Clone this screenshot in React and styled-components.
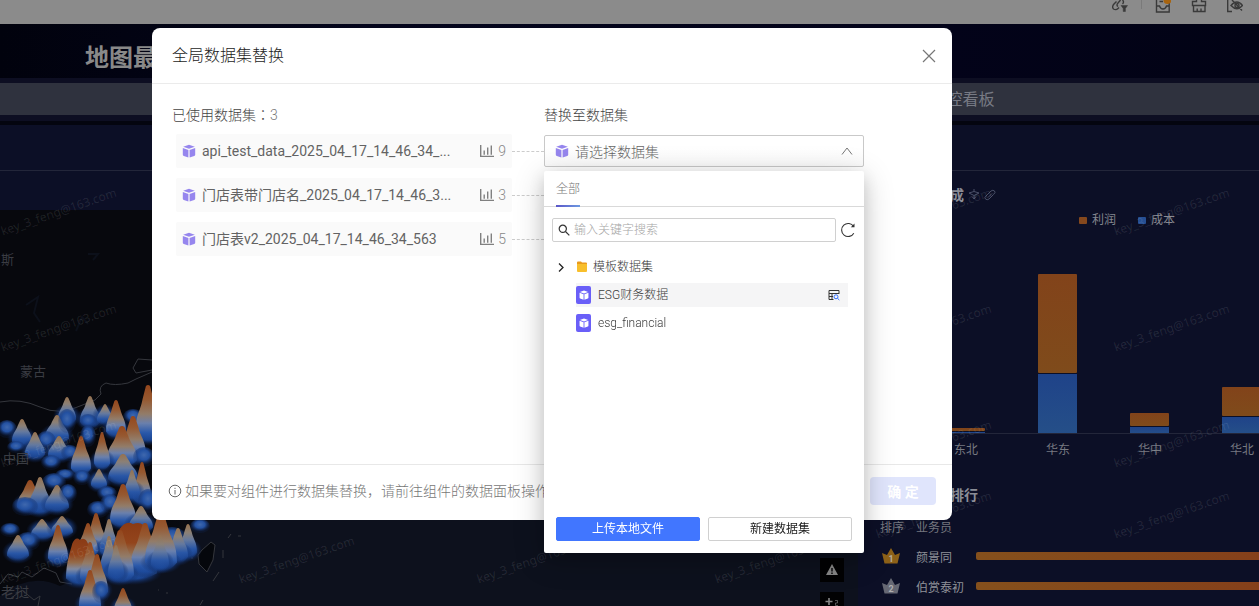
import React from "react";
import styled, { createGlobalStyle, css } from "styled-components";

const GlobalStyle = createGlobalStyle`
  *, *::before, *::after { box-sizing: border-box; }
  body {
    margin: 0;
    background: #0b0d18;
    font-family: Roboto, "Noto Sans CJK SC", sans-serif;
    font-size: 14px;
    font-weight: 300;
    color: #333;
  }
  button, input, select { font: inherit; color: inherit; }
  ul { list-style: none; margin: 0; padding: 0; }
  h1, h2, h3, p { margin: 0; }
  svg { display: block; flex: none; }
`;

/* ---------- Dashboard shell ---------- */

const Page = styled.div`
  height: 100vh;
  overflow: hidden;
  display: flex;
  flex-direction: column;
`;

const TopBar = styled.header`
  flex: none;
  height: 24px;
  padding-right: 16px;
  display: flex;
  justify-content: flex-end;
  align-items: flex-start;
  gap: 20px;
  background: #8b8b8b;
`;

const ToolButton = styled.button`
  width: 16px;
  height: 13px;
  padding: 0;
  border: 0;
  background: none;
  color: #3a3a3a;
`;

const Separator = styled.span`
  width: 1px;
  height: 9px;
  margin: 0 -7px 0 -7px;
  background: #7a7a7a;
`;

const Banner = styled.div`
  flex: none;
  height: 54px;
  padding: 16px 85px 0;
  background: linear-gradient(90deg, #01020d, #04051c 30%, #03031a 70%, #020315);
`;

const BannerTitle = styled.h1`
  font-size: 24px;
  line-height: 36px;
  font-weight: 700;
  color: #898989;
`;

const Ribbon = styled.div`
  flex: none;
  border: solid #0d0e22;
  border-width: 5px 0 6px;
  background: #2f323e;
`;

const RibbonTitle = styled.h2`
  width: 79%;
  height: 32px;
  padding-top: 2px;
  text-align: right;
  font-size: 16px;
  line-height: 30px;
  font-weight: 400;
  color: #777a84;
`;

const Board = styled.main`
  flex: 1;
  min-height: 0;
  display: flex;
  border-top: 4px solid #04050f;
`;

const MapCard = styled.section`
  flex: 1;
  min-width: 0;
  position: relative;
  display: flex;
  flex-direction: column;
  overflow: hidden;
  background: #0c0f26;
`;

const CardHead = styled.header`
  flex: none;
  height: ${(p) => p.$height}px;
  border-bottom: 1px solid #23263a;
`;

const MapGap = styled.div`
  flex: none;
  height: 39px;
`;

const MapView = styled.div`
  flex: 1;
  min-height: 0;
  background: linear-gradient(90deg, #07080d 0, #07080d 160px, #0e111e 260px);
`;

const MapTools = styled.div`
  position: absolute;
  right: 14px;
  bottom: -10px;
  display: grid;
  gap: 10px;
`;

const MapTool = styled.button`
  width: 24px;
  height: 24px;
  padding: 4px;
  border: 0;
  background: #020203;
  color: #858585;
`;

const SideColumn = styled.aside`
  flex: 0 0 401px;
  min-width: 0;
  display: flex;
  flex-direction: column;
  background: #0c0f26;
`;

const Card = styled.section`
  position: relative;
  overflow: hidden;
  flex: ${(p) => (p.$grow ? "1" : "none")};
`;

const ChartTitle = styled.h3`
  display: flex;
  align-items: center;
  gap: 4px;
  padding: 13px 0 0 92px;
  font-size: 14px;
  line-height: 22px;
  font-weight: 700;
  color: #8b8d96;
`;

const Legend = styled.ul`
  display: flex;
  gap: 22px;
  padding: 5px 0 0 221px;
  font-size: 12px;
  line-height: 18px;
  font-weight: 400;
  color: #85878f;
`;

const LegendItem = styled.li`
  display: flex;
  align-items: center;
  gap: 5px;
  &::before {
    content: "";
    width: 8px;
    height: 7px;
    border-radius: 1px;
    background: ${(p) => p.$color};
  }
`;

const RankTitle = styled.h3`
  padding: 11px 0 0 92px;
  font-size: 14px;
  line-height: 22px;
  font-weight: 700;
  color: #8b8d96;
`;

const RankTable = styled.table`
  width: 100%;
  margin-top: 5px;
  border-collapse: collapse;
  table-layout: fixed;
  font-size: 12px;
  font-weight: 400;
  color: #8f9198;
  th, td { padding: 0; height: 30px; text-align: left; font-weight: 400; }
  th { color: #74767e; }
  th:first-child { width: 58px; padding-left: 22px; }
  td:first-child { padding-left: 24px; }
  th:nth-child(2) { width: 60px; }
`;

const RankBar = styled.div`
  height: 8px;
  border-radius: 2px 0 0 2px;
  background: linear-gradient(90deg, #85501c, #85401a);
`;

/* ---------- Watermark ---------- */

const WatermarkLayer = styled.div`
  position: absolute;
  inset: ${(p) => p.$top}px 0 auto ${(p) => p.$left}px;
  display: grid;
  grid-template-columns: repeat(${(p) => p.$cols}, 238px);
  grid-auto-rows: 116px;
  pointer-events: none;
  span {
    place-self: center;
    font-family: "Noto Sans", sans-serif;
    font-size: 12px;
    font-weight: 400;
    color: rgba(255, 255, 255, 0.1);
    transform: rotate(-19deg);
  }
`;

function Watermark({ cols, rows, left, top }) {
  return (
    <WatermarkLayer $cols={cols} $left={left} $top={top} aria-hidden="true">
      {Array.from({ length: cols * rows }, (_, i) => (
        <span key={i}>key_3_feng@163.com</span>
      ))}
    </WatermarkLayer>
  );
}

/* ---------- Map drawing ---------- */

// [x, summit, base, half width, kind] — kinds: H broad hot, h hot, w warm, c cool
const PEAKS = [
  [67, 187, 212, 9, "w"], [90, 186, 215, 10, "w"], [105, 194, 212, 8, "w"],
  [133, 200, 214, 9, "c"], [116, 190, 225, 10, "h"], [148, 175, 230, 13, "h"],
  [7, 211, 227, 9, "c"], [22, 209, 234, 10, "w"], [57, 205, 231, 12, "w"], [67, 200, 222, 8, "c"],
  [88, 205, 218, 8, "c"], [88, 216, 236, 7, "c"], [46, 222, 240, 9, "c"],
  [35, 222, 247, 10, "w"], [133, 206, 250, 13, "h"], [122, 216, 254, 15, "h"],
  [16, 232, 242, 8, "c"], [59, 226, 248, 11, "w"], [70, 236, 250, 8, "c"], [102, 222, 257, 8, "h"],
  [81, 226, 262, 10, "h"], [51, 246, 259, 9, "c"], [144, 238, 256, 10, "c"],
  [123, 244, 272, 15, "w"], [65, 260, 270, 9, "c"], [54, 264, 280, 11, "c"], [82, 261, 274, 8, "c"],
  [99, 259, 277, 8, "w"], [142, 252, 292, 9, "h"], [132, 260, 288, 8, "w"],
  [30, 270, 300, 13, "h"], [40, 267, 302, 11, "w"], [57, 275, 300, 12, "w"], [68, 275, 292, 8, "c"], [25, 288, 305, 12, "c"],
  [107, 277, 290, 9, "c"], [148, 280, 302, 9, "c"], [98, 292, 307, 10, "c"], [110, 285, 302, 9, "c"], [123, 274, 315, 13, "h"],
  [141, 296, 320, 12, "w"], [10, 314, 326, 9, "c"],
  [42, 309, 327, 11, "w"], [62, 306, 324, 11, "w"], [28, 323, 340, 11, "c"],
  [18, 325, 348, 11, "w"], [58, 315, 352, 10, "h"],
  [96, 303, 340, 10, "h"], [88, 313, 345, 10, "h"], [109, 309, 345, 9, "w"],
  [172, 318, 340, 14, "c"], [200, 310, 322, 9, "c"],
  [188, 314, 346, 9, "w"], [178, 318, 350, 10, "w"],
  [133, 312, 369, 24, "H"], [145, 313, 362, 14, "h"], [120, 320, 370, 14, "h"],
  [161, 302, 358, 16, "h"], [160, 325, 358, 9, "w"],
  [109, 326, 365, 9, "w"], [116, 335, 368, 8, "w"],
  [80, 328, 373, 14, "H"], [90, 332, 372, 10, "h"], [97, 344, 386, 11, "h"],
  [90, 360, 400, 11, "h"], [101, 372, 392, 8, "c"], [123, 378, 404, 9, "h"],
];

const ridge = (x, top, base, half) => {
  const h = base - top;
  const at = (f) => base - h * f;
  return `M${x - half} ${at(0.1)}
    C${x - half} ${at(0.45)} ${x - half * 0.6} ${at(0.5)} ${x - half * 0.42} ${at(0.74)}
    L${x - half * 0.16} ${top + 1} Q${x} ${top - 1} ${x + half * 0.16} ${top + 1}
    L${x + half * 0.42} ${at(0.74)}
    C${x + half * 0.6} ${at(0.5)} ${x + half} ${at(0.45)} ${x + half} ${at(0.1)}
    Q${x + half * 0.6} ${base + 3} ${x} ${base + 3}
    Q${x - half * 0.6} ${base + 3} ${x - half} ${at(0.1)}Z`;
};

const plateau = (x, top, base, half) => {
  const h = base - top;
  const at = (f) => base - h * f;
  return `M${x - half} ${at(0.1)}
    C${x - half} ${at(0.45)} ${x - half * 0.7} ${at(0.7)} ${x - half * 0.55} ${at(0.88)}
    Q${x - half * 0.3} ${top - 2} ${x} ${top + 2} Q${x + half * 0.4} ${top - 2} ${x + half * 0.6} ${at(0.85)}
    C${x + half * 0.7} ${at(0.7)} ${x + half} ${at(0.45)} ${x + half} ${at(0.1)}
    Q${x} ${base + 8} ${x - half} ${at(0.1)}Z`;
};

const SHAPES = { H: plateau, h: ridge, w: ridge };

const STOPS = {
  H: [["0", "#8a3a15"], ["0.35", "#93451c"], ["0.52", "#936b4b"], ["0.66", "#8089a0"], ["0.8", "#3462ae"], ["1", "#173f8c"]],
  h: [["0", "#94461c"], ["0.25", "#965931"], ["0.5", "#927c69"], ["0.66", "#6a80ac"], ["0.82", "#2b59aa"], ["1", "#173f8c"]],
  w: [["0", "#96714e"], ["0.25", "#8b8076"], ["0.46", "#64799f"], ["0.7", "#2a57a6"], ["1", "#173f8c"]],
};

function TerrainMap() {
  return (
    <svg width="858" height="396" viewBox="0 0 858 396" aria-hidden="true">
      <defs>
        {Object.entries(STOPS).map(([id, stops]) => (
          <linearGradient key={id} id={`heat-${id}`} x1="0" y1="0" x2="0" y2="1">
            {stops.map(([offset, color], i) => (
              <stop
                key={offset}
                offset={offset}
                stopColor={color}
                stopOpacity={i === stops.length - 1 ? 0 : 1}
              />
            ))}
          </linearGradient>
        ))}
        <radialGradient id="glow">
          <stop offset="0" stopColor="#2456ac" />
          <stop offset="0.5" stopColor="#1c4a9c" stopOpacity="0.9" />
          <stop offset="1" stopColor="#0e2456" stopOpacity="0" />
        </radialGradient>
        <radialGradient id="dome" cx="0.5" cy="0.4">
          <stop offset="0" stopColor="#3f68ae" />
          <stop offset="0.5" stopColor="#2351a2" />
          <stop offset="1" stopColor="#112c66" stopOpacity="0.2" />
        </radialGradient>
      </defs>
      <path d="M0 396V386Q30 362 60 376Q150 340 240 290H858V396Z" fill="#0d111d" />
      <g fill="none" stroke="#35373d" strokeWidth="1">
        <path d="M0 192Q20 188 40 197T80 196L95 190L101 184Q98 176 106 173Q114 176 128 173L136 169L152 162" />
        <path d="M152 150L138 149L133 158L136 163L152 160" />
        <path d="M0 374L8 364L18 367L22 362L32 367L44 358L56 363L60 372L72 374M10 389L22 380L34 390L40 386L38 396" />
        <path d="M202 340L211 332L215 335L213 350L207 362L199 354L198 345Z" fill="#05070c" />
        <path d="M223 340V348M219 362L213 371M228 328L231 324M238 326H241M200 395L203 390M192 347V349M158 380H159M166 383H168" />
      </g>
      <g fill="none" stroke="#0c101a" strokeWidth="2">
        <path d="M88 44L98 44L93 50M26 95L38 87L34 103L40 112M76 121L82 107L88 114" />
      </g>
      {PEAKS.map(([x, top, base, half, kind], i) =>
        kind === "c" ? (
          <ellipse key={i} cx={x} cy={(top + base) / 2} rx={half + 1} ry={(base - top) / 2 + 1} fill="url(#dome)" />
        ) : (
          <g key={i}>
            <ellipse cx={x} cy={base - 6} rx={half + 5} ry="12" fill="url(#glow)" />
            <path d={SHAPES[kind](x, top, base, half)} fill={`url(#heat-${kind})`} />
          </g>
        )
      )}
      <g fill="#3a3c43" fontSize="13" fontWeight="400">
        <text x="-12" y="54">罗斯</text>
        <text x="20" y="166">蒙古</text>
        <text x="3" y="253">中国</text>
        <text x="1" y="387" fontSize="14">老挝</text>
      </g>
    </svg>
  );
}

/* ---------- Bar chart ---------- */

const REGIONS = [
  { name: "东北", x: 88, profit: 4, cost: 2 },
  { name: "华东", x: 180, profit: 100, cost: 60 },
  { name: "华中", x: 272, profit: 14, cost: 7 },
  { name: "华北", x: 364, profit: 30, cost: 17 },
];

function BarChart() {
  const base = 205;
  return (
    <svg width="401" height="244" viewBox="0 0 401 244" role="img" aria-label="利润 成本">
      <defs>
        <linearGradient id="profit" x1="0" y1="0" x2="0" y2="1">
          <stop offset="0" stopColor="#82431a" />
          <stop offset="1" stopColor="#7f4b1b" />
        </linearGradient>
        <linearGradient id="cost" x1="0" y1="0" x2="0" y2="1">
          <stop offset="0" stopColor="#1f4389" />
          <stop offset="1" stopColor="#254f88" />
        </linearGradient>
      </defs>
      {REGIONS.map((r) => (
        <g key={r.name}>
          <rect x={r.x} y={base - r.cost - r.profit} width="39" height={r.profit - 1} rx="1" fill="url(#profit)" />
          <rect x={r.x} y={base - r.cost} width="39" height={r.cost} fill="url(#cost)" />
          <text x={r.x + 20} y={base + 20} textAnchor="middle" fontSize="12" fontWeight="400" fill="#777981">
            {r.name}
          </text>
        </g>
      ))}
      <path d={`M0 ${base - 1}.5H401`} stroke="#23263a" />
    </svg>
  );
}

/* ---------- Modal ---------- */

const Backdrop = styled.div`
  position: fixed;
  inset: 0;
  display: flex;
  justify-content: center;
  align-items: flex-start;
  padding: 28px 0 0;
`;

const Modal = styled.section`
  position: relative;
  width: 800px;
  margin-right: 155px;
  border-radius: 8px;
  background: #fff;
`;

const ModalHead = styled.header`
  display: flex;
  align-items: center;
  justify-content: space-between;
  height: 56px;
  padding: 0 16px 0 20px;
  border-bottom: 1px solid #ebebeb;
`;

const ModalTitle = styled.h2`
  font-size: 16px;
  line-height: 24px;
  font-weight: 300;
  color: #1c1c1c;
`;

const IconButton = styled.button`
  display: grid;
  place-items: center;
  width: ${(p) => p.$size}px;
  height: ${(p) => p.$size}px;
  padding: 0;
  border: 0;
  background: none;
  color: ${(p) => p.$color || "#333"};
`;

const ModalBody = styled.div`
  display: grid;
  grid-template-columns: 372px 320px;
  align-items: start;
  min-height: 380px;
  padding: 20px;
`;

const Column = styled.div`
  display: grid;
  gap: 8px;
`;

const columnLabel = css`
  height: 22px;
  font-size: 14px;
  line-height: 22px;
  font-weight: 300;
  color: #444;
`;

const ColumnTitle = styled.h3`
  ${columnLabel}
  span { color: #777; }
  i { font-family: "Noto Sans CJK TC"; font-style: normal; line-height: 1; }
`;

const ColumnLabel = styled.label`
  ${columnLabel}
`;

const UsedList = styled.ul`
  display: grid;
  gap: 10px;
  padding-left: 4px;
`;

const UsedRow = styled.li`
  display: flex;
  align-items: center;
  &::after {
    content: "";
    flex: 1;
    border-top: 1px dashed #ccc;
  }
`;

const UsedItem = styled.div`
  display: flex;
  align-items: center;
  width: 336px;
  height: 34px;
  padding: 0 6px;
  border-radius: 2px;
  background: #fafafa;
`;

const UsedName = styled.span`
  flex: 1;
  min-width: 0;
  margin-left: 6px;
  padding-bottom: 1px;
  line-height: 22px;
  font-weight: 400;
  color: #636363;
`;

const UsedCount = styled.span`
  display: flex;
  align-items: center;
  gap: 4px;
  line-height: 22px;
  color: #888;
`;

const SelectField = styled.div`
  position: relative;
  display: flex;
  align-items: center;
  height: 34px;
`;

const SelectBox = styled.div`
  flex: 1;
  display: flex;
  align-items: center;
  height: 32px;
  padding: 0 10px;
  border: 1px solid #c9c9c9;
  border-radius: 2px;
  background: linear-gradient(#fff 40%, #fafafa);
`;

const Select = styled.select`
  flex: 1;
  height: 30px;
  padding: 1px 6px 0;
  border: 0;
  background: none;
  appearance: none;
  color: #666;
`;

const Popup = styled.div`
  position: absolute;
  top: 37px;
  left: 0;
  right: 0;
  z-index: 2;
  display: flex;
  flex-direction: column;
  min-height: 382px;
  border-radius: 2px;
  background: #fff;
  box-shadow: 0 6px 16px rgba(0, 0, 0, 0.12), 0 6px 32px rgba(0, 0, 0, 0.2);
`;

const Tabs = styled.nav`
  height: 36px;
  padding: 0 12px;
  border-bottom: 1px solid #d9d9d9;
`;

const Tab = styled.button`
  position: relative;
  height: 36px;
  padding: 0 0 3px;
  border: 0;
  background: none;
  font-size: 12px;
  color: #777;
  &::after {
    content: "";
    position: absolute;
    inset: auto 0 0;
    height: 2px;
    background: linear-gradient(90deg, #5a55c8, #6d9ae0);
  }
`;

const SearchRow = styled.div`
  display: flex;
  align-items: center;
  gap: 4px;
  padding: 11px 8px 0;
`;

const SearchBox = styled.label`
  flex: 1;
  display: flex;
  align-items: center;
  height: 24px;
  padding: 0 5px;
  border: 1px solid #d0d0d0;
  border-radius: 2px;
`;

const SearchInput = styled.input`
  flex: 1;
  min-width: 0;
  height: 22px;
  padding: 0 4px;
  border: 0;
  outline: 0;
  background: none;
  font-size: 12px;
  &::placeholder { color: #a5a5a5; opacity: 1; }
`;

const Tree = styled.ul`
  flex: 1;
  display: grid;
  align-content: start;
  gap: 4px;
  padding: 13px 16px 0 12px;
  font-size: 12px;
  line-height: 24px;
  color: #3a3a3a;
`;

const TreeRow = styled.li`
  display: flex;
  align-items: center;
  height: 24px;
  margin-left: ${(p) => (p.$leaf ? 20 : 0)}px;
  padding-right: 8px;
  background: ${(p) => (p.$active ? "#f5f5f6" : "none")};
`;

const TreeName = styled.span`
  flex: 1;
  display: flex;
  align-items: center;
  gap: 6px;
  margin-left: ${(p) => p.$gap}px;
`;

const DatasetBadge = styled.span`
  display: grid;
  place-items: center;
  width: 15px;
  height: 18px;
  border-radius: 2px;
  background: #6a5ff8;
`;

const PopupFoot = styled.footer`
  display: grid;
  grid-template-columns: 1fr 1fr;
  gap: 8px;
  padding: 12px;
`;

const SmallButton = styled.button`
  height: 24px;
  padding: 0 0 3px;
  border: 1px solid ${(p) => (p.$primary ? "#4176ff" : "#d0d0d0")};
  border-radius: 2px;
  background: ${(p) => (p.$primary ? "#4176ff" : "#fff")};
  color: ${(p) => (p.$primary ? "#fff" : "#222")};
  font-size: 12px;
  font-weight: 400;
`;

const ModalFoot = styled.footer`
  display: flex;
  align-items: center;
  height: 56px;
  padding: 0 16px 3px;
  border-top: 1px solid #e8e8e8;
`;

const Hint = styled.p`
  flex: 1;
  display: flex;
  align-items: center;
  gap: 3px;
  line-height: 22px;
  color: #777;
`;

const ConfirmButton = styled.button`
  width: 66px;
  height: 28px;
  padding: 0;
  border: 0;
  border-radius: 4px;
  background: #e0e5fc;
  color: #fff;
  font-weight: 700;
`;

/* ---------- Icons ---------- */

function Cube({ size = 14, color = "#9686ee" }) {
  return (
    <svg width={size} height={size} viewBox="0 0 14 14" fill={color} aria-hidden="true">
      <path d="M7 0.8L12.8 2.7L7 4.800L1.2 2.7Z" />
      <path d="M0.8 4L6.4 5.900V13.5L1.8 12Q0.8 11.6 0.8 10.8Z" />
      <path d="M13.2 4L7.6 5.900V13.5L12.2 12Q13.2 11.6 13.2 10.8Z" />
    </svg>
  );
}

const ChartIcon = () => (
  <svg width="14" height="14" viewBox="0 0 14 14" fill="none" stroke="#808080" strokeWidth="1.4" aria-hidden="true">
    <path d="M0.700 1V12.400H14M4.200 6.500V10.800M7.700 3.500V10.800M11.300 1.500V10.800" />
  </svg>
);

const Chevron = () => (
  <svg width="12" height="12" viewBox="0 0 12 12" fill="none" stroke="#777" aria-hidden="true">
    <path d="M1 9.5L6 3L11 9.5" />
  </svg>
);

const Crown = ({ rank, color }) => (
  <svg width="18" height="16" viewBox="0 0 18 16" role="img" aria-label={`${rank}`}>
    <path d="M0 5L5 7L9 0L13 7L18 5L15.5 15.5H2.5Z" fill={color} />
    <text x="9" y="14" textAnchor="middle" fontSize="9" fontWeight="700" fill="#c0c0c0" opacity=".8">
      {rank}
    </text>
  </svg>
);

const USED = [
  { name: "api_test_data_2025_04_17_14_46_34_...", count: 9 },
  { name: "门店表带门店名_2025_04_17_14_46_3...", count: 3 },
  { name: "门店表v2_2025_04_17_14_46_34_563", count: 5 },
];

function Toolbar() {
  const draw = { width: 16, height: 13, viewBox: "0 0 16 13", fill: "none", stroke: "currentColor", strokeWidth: 1.4 };
  return (
    <TopBar>
      <ToolButton aria-label="联动">
        <svg {...draw}>
          <path d="M4.500 1.500L2 4Q-0.500 7 1.500 9Q4 10.500 6 8.500L7 7.500M6 6.500Q4 5 6 3L8.500 0M10.500 0Q12.500 2 10.500 4" />
          <path d="M9 5.500H15.500L13.400 8.500V11.500H11.200V8.500Z" fill="currentColor" strokeWidth=".5" />
        </svg>
      </ToolButton>
      <Separator />
      <ToolButton aria-label="收件箱">
        <svg {...draw}>
          <path d="M1.500 0V12H14.200V3M4.500 1.500H8M1.500 6H4.500Q5.500 9 8 9T11.500 6H14" />
          <circle cx="12.500" cy="0" r="4" fill="#a8640f" stroke="none" />
        </svg>
      </ToolButton>
      <ToolButton aria-label="清理">
        <svg {...draw}>
          <path d="M5.500 0V1.500H1.500V5.500H14.500V1.500H10.500V0M2.500 5.500V11.500H14V5.500M6.200 8.500V11.500M10 8.500V11.500" />
        </svg>
      </ToolButton>
      <ToolButton aria-label="预览">
        <svg {...draw}>
          <path d="M0.700 0V11.500H5M4 5.500Q10 -1.500 15.500 5.500Q10 12 4 5.500ZM5 0L15 10.500" />
          <circle cx="10" cy="5.500" r="2" />
        </svg>
      </ToolButton>
    </TopBar>
  );
}

function Dashboard() {
  return (
    <Page>
      <Toolbar />
      <Banner>
        <BannerTitle>地图最</BannerTitle>
      </Banner>
      <Ribbon>
        <RibbonTitle>控看板</RibbonTitle>
      </Ribbon>
      <Board>
        <MapCard>
          <CardHead $height={46} />
          <MapGap />
          <MapView>
            <TerrainMap />
          </MapView>
          <Watermark cols={4} rows={4} left={-60} top={28} />
          <MapTools>
            <MapTool aria-label="警告">
              <svg width="16" height="16" viewBox="0 0 16 16">
                <path d="M8 2L14 13H2Z" fill="currentColor" />
                <path d="M8 6V9.500M8 10.500V12" stroke="#020203" strokeWidth="1.400" />
              </svg>
            </MapTool>
            <MapTool aria-label="放大">
              <svg width="16" height="16" viewBox="0 0 16 16" fill="none" stroke="currentColor">
                <path d="M5 2V9M1.500 5.500H8.500" strokeWidth="1.600" />
                <path d="M11 4.500H13.500V7H11.500V9.500H14" opacity=".6" />
              </svg>
            </MapTool>
          </MapTools>
        </MapCard>
        <SideColumn>
          <Card>
            <CardHead $height={46} />
            <ChartTitle>
              成
              <svg width="34" height="14" viewBox="0 0 34 14" fill="none" stroke="#4a5068">
                <path d="M1 5L6 3.500L11 5L6 7.500ZM6 1V3.500M4 8.500L6 11L8 8.500M6 7.500V11" />
                <path d="M18 8L23 3Q25 1.500 26.500 3T25.500 6.500L21 11Q19 12.500 17.500 11T18 8M20 9.500L24 5.500" />
              </svg>
            </ChartTitle>
            <Legend>
              <LegendItem $color="#85481d">利润</LegendItem>
              <LegendItem $color="#264f93">成本</LegendItem>
            </Legend>
            <BarChart />
            <Watermark cols={2} rows={3} left={-43} top={28} />
          </Card>
          <Card $grow>
            <RankTitle>排行</RankTitle>
            <RankTable>
              <thead>
                <tr>
                  <th>排序</th>
                  <th>业务员</th>
                  <th aria-label="业绩" />
                </tr>
              </thead>
              <tbody>
                <tr>
                  <td><Crown rank={1} color="#8d6118" /></td>
                  <td>颜景同</td>
                  <td><RankBar /></td>
                </tr>
                <tr>
                  <td><Crown rank={2} color="#666873" /></td>
                  <td>伯赏泰初</td>
                  <td><RankBar /></td>
                </tr>
              </tbody>
            </RankTable>
            <Watermark cols={2} rows={1} left={-43} top={-17} />
          </Card>
        </SideColumn>
      </Board>
    </Page>
  );
}

function DatasetPopup() {
  return (
    <Popup>
      <Tabs>
        <Tab type="button">全部</Tab>
      </Tabs>
      <SearchRow>
        <SearchBox>
          <svg width="12" height="12" viewBox="0 0 12 12" fill="none" stroke="#333" strokeWidth="1.2" aria-hidden="true">
            <circle cx="4.800" cy="4.800" r="3.600" />
            <path d="M7.500 7.500L11.300 11.300" />
          </svg>
          <SearchInput type="text" placeholder="输入关键字搜索" aria-label="输入关键字搜索" />
        </SearchBox>
        <IconButton $size={16} aria-label="刷新">
          <svg width="16" height="16" viewBox="0 0 16 16" fill="none" stroke="#333" strokeWidth="1.1">
            <path d="M13.800 11.200A6.500 6.500 0 1 1 13.600 4.500" />
            <path d="M14.500 1.500V5.200H10.800Z" fill="#333" stroke="none" />
          </svg>
        </IconButton>
      </SearchRow>
      <Tree>
        <TreeRow>
          <IconButton $size={10} aria-label="展开">
            <svg width="10" height="10" viewBox="0 0 10 10" fill="none" stroke="#222" strokeWidth="1.3">
              <path d="M3 1.500L7 5.500L3 9.500" />
            </svg>
          </IconButton>
          <TreeName $gap={11}>
            <svg width="10" height="12" viewBox="0 0 10 12" aria-hidden="true">
              <path d="M0 1.500Q0 0.500 1 0.500H4L5 1.500H9Q10 1.500 10 2.500V4H0Z" fill="#e99a1c" />
              <path d="M0 3H10V10Q10 11 9 11H1Q0 11 0 10Z" fill="#f8bf2c" />
            </svg>
            模板数据集
          </TreeName>
        </TreeRow>
        <TreeRow $leaf $active>
          <DatasetBadge><Cube size={10} color="#fff" /></DatasetBadge>
          <TreeName $gap={7}>ESG财务数据</TreeName>
          <svg width="12" height="12" viewBox="0 0 12 12" fill="none" stroke="#333" aria-hidden="true">
            <path d="M5.500 10.500H1V1.500H11V5M1 4.500H11M4 4.500V10.500M1 7.500H5" />
            <circle cx="8" cy="7.800" r="2" stroke="#3370ff" />
            <path d="M9.500 9.300L11.300 11" stroke="#3370ff" />
          </svg>
        </TreeRow>
        <TreeRow $leaf>
          <DatasetBadge><Cube size={10} color="#fff" /></DatasetBadge>
          <TreeName $gap={7}>esg_financial</TreeName>
        </TreeRow>
      </Tree>
      <PopupFoot>
        <SmallButton type="button" $primary>上传本地文件</SmallButton>
        <SmallButton type="button">新建数据集</SmallButton>
      </PopupFoot>
    </Popup>
  );
}

function ReplaceModal() {
  return (
    <Backdrop>
      <Modal role="dialog" aria-labelledby="replace-title">
        <ModalHead>
          <ModalTitle id="replace-title">全局数据集替换</ModalTitle>
          <IconButton $size={14} $color="#777" aria-label="关闭">
            <svg width="14" height="14" viewBox="0 0 14 14" fill="none" stroke="currentColor" strokeWidth="1.2">
              <path d="M1 1L13 13M13 1L1 13" />
            </svg>
          </IconButton>
        </ModalHead>
        <ModalBody>
          <Column>
            <ColumnTitle>
              已使用数据集<i>：</i><span>3</span>
            </ColumnTitle>
            <UsedList>
              {USED.map((d) => (
                <UsedRow key={d.name}>
                  <UsedItem>
                    <Cube />
                    <UsedName>{d.name}</UsedName>
                    <UsedCount>
                      <ChartIcon />
                      {d.count}
                    </UsedCount>
                  </UsedItem>
                </UsedRow>
              ))}
            </UsedList>
          </Column>
          <Column>
            <ColumnLabel htmlFor="target-dataset">替换至数据集</ColumnLabel>
            <SelectField>
              <SelectBox>
                <Cube />
                <Select id="target-dataset" defaultValue="">
                  <option value="">请选择数据集</option>
                </Select>
                <Chevron />
              </SelectBox>
              <DatasetPopup />
            </SelectField>
          </Column>
        </ModalBody>
        <ModalFoot>
          <Hint>
            <svg width="14" height="14" viewBox="0 0 14 14" fill="none" stroke="#666" aria-hidden="true">
              <circle cx="7" cy="7" r="5.800" />
              <path d="M7 6V10.500M7 3.800V5" />
            </svg>
            如果要对组件进行数据集替换，请前往组件的数据面板操作
          </Hint>
          <ConfirmButton type="button" disabled>确 定</ConfirmButton>
        </ModalFoot>
      </Modal>
    </Backdrop>
  );
}

export default function App() {
  return (
    <>
      <GlobalStyle />
      <Dashboard />
      <ReplaceModal />
    </>
  );
}
